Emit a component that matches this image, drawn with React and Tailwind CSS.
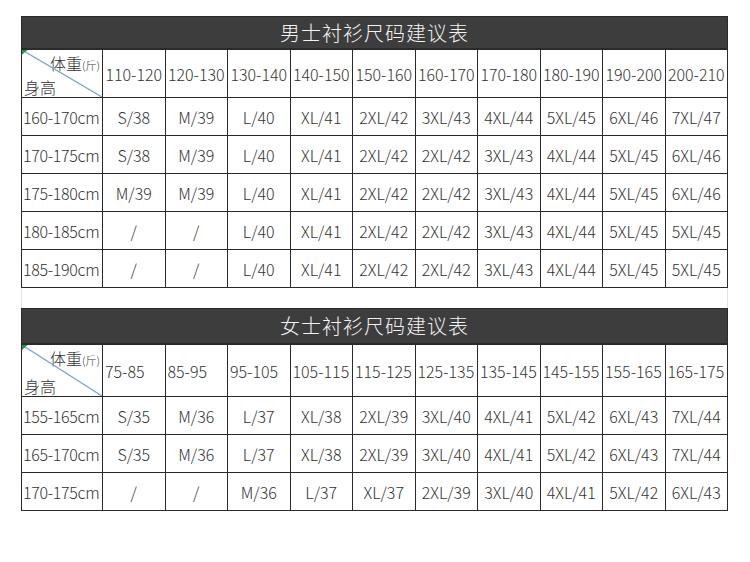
import React from 'react';

const weights1 = ['110-120', '120-130', '130-140', '140-150', '150-160', '160-170', '170-180', '180-190', '190-200', '200-210'];
const rows1 = [
  ['160-170cm', 'S/38', 'M/39', 'L/40', 'XL/41', '2XL/42', '3XL/43', '4XL/44', '5XL/45', '6XL/46', '7XL/47'],
  ['170-175cm', 'S/38', 'M/39', 'L/40', 'XL/41', '2XL/42', '2XL/42', '3XL/43', '4XL/44', '5XL/45', '6XL/46'],
  ['175-180cm', 'M/39', 'M/39', 'L/40', 'XL/41', '2XL/42', '2XL/42', '3XL/43', '4XL/44', '5XL/45', '6XL/46'],
  ['180-185cm', '/', '/', 'L/40', 'XL/41', '2XL/42', '2XL/42', '3XL/43', '4XL/44', '5XL/45', '5XL/45'],
  ['185-190cm', '/', '/', 'L/40', 'XL/41', '2XL/42', '2XL/42', '3XL/43', '4XL/44', '5XL/45', '5XL/45'],
];

const weights2 = ['75-85', '85-95', '95-105', '105-115', '115-125', '125-135', '135-145', '145-155', '155-165', '165-175'];
const rows2 = [
  ['155-165cm', 'S/35', 'M/36', 'L/37', 'XL/38', '2XL/39', '3XL/40', '4XL/41', '5XL/42', '6XL/43', '7XL/44'],
  ['165-170cm', 'S/35', 'M/36', 'L/37', 'XL/38', '2XL/39', '3XL/40', '4XL/41', '5XL/42', '6XL/43', '7XL/44'],
  ['170-175cm', '/', '/', 'M/36', 'L/37', 'XL/37', '2XL/39', '3XL/40', '4XL/41', '5XL/42', '6XL/43'],
];

const CornerCell = ({ innerH }) => (
  <th className="relative w-[81px] border border-[#2a2a2a] p-0 font-light">
    <svg className="absolute inset-0 h-full w-full" preserveAspectRatio="none" viewBox="0 0 100 100">
      <line x1="0" y1="0" x2="100" y2="100" stroke="#7ea6cc" strokeWidth="1.3" vectorEffect="non-scaling-stroke" />
      <polygon points="0,0 7,0 0,10" fill="#2f8f4e" />
    </svg>
    <div className={`${innerH} flex flex-col justify-between px-[2px] pt-[2px]`}>
      <div className="flex items-baseline justify-end text-[16px] leading-[22px]">
        体重<span className="text-[11px]">(斤)</span>
      </div>
      <div className="text-left text-[16px] leading-[20px]">身高</div>
    </div>
  </th>
);

const SizeTable = ({ title, weights, rows, titleH, headH, innerH, leftHead }) => (
  <div>
    <div className={`${titleH} flex items-center justify-center border border-[#2a2a2a] bg-[#3d3d3d] text-[20px] font-light tracking-[1px] text-[#f2f2f2]`}>
      {title}
    </div>
    <table className="w-full table-fixed border-collapse">
      <colgroup>
        <col className="w-[81px]" />
      </colgroup>
      <thead>
        <tr className={headH}>
          <CornerCell innerH={innerH} />
          {weights.map((w, i) => (
            <th
              key={i}
              className={`border border-[#2a2a2a] px-[2px] text-[16px] font-light ${leftHead ? 'text-left' : 'text-center'}`}
            >
              {w}
            </th>
          ))}
        </tr>
      </thead>
      <tbody>
        {rows.map((r, i) => (
          <tr key={i} className="h-[38px]">
            {r.map((c, j) => (
              <td
                key={j}
                className={`border border-[#2a2a2a] text-[16px] font-light whitespace-nowrap ${j === 0 ? 'pl-[1px] text-left tracking-[-0.3px]' : 'text-center'}`}
              >
                {c}
              </td>
            ))}
          </tr>
        ))}
      </tbody>
    </table>
  </div>
);

export default function App() {
  return (
    <div
      className="h-[562px] w-[750px] bg-white pl-[21px] pt-[16px] text-[#333]"
      style={{ fontFamily: '"Noto Sans CJK SC", "Noto Sans", sans-serif' }}
    >
      <div className="w-[707px]">
        <SizeTable
          title="男士衬衫尺码建议表"
          weights={weights1}
          rows={rows1}
          titleH="h-[33px]"
          headH="h-[48px]"
          innerH="h-[47px]"
          leftHead={false}
        />
        <div className="h-[20px] border-x border-[#e2e2e2]" />
        <SizeTable
          title="女士衬衫尺码建议表"
          weights={weights2}
          rows={rows2}
          titleH="h-[36px]"
          headH="h-[52px]"
          innerH="h-[51px]"
          leftHead={true}
        />
      </div>
    </div>
  );
}
